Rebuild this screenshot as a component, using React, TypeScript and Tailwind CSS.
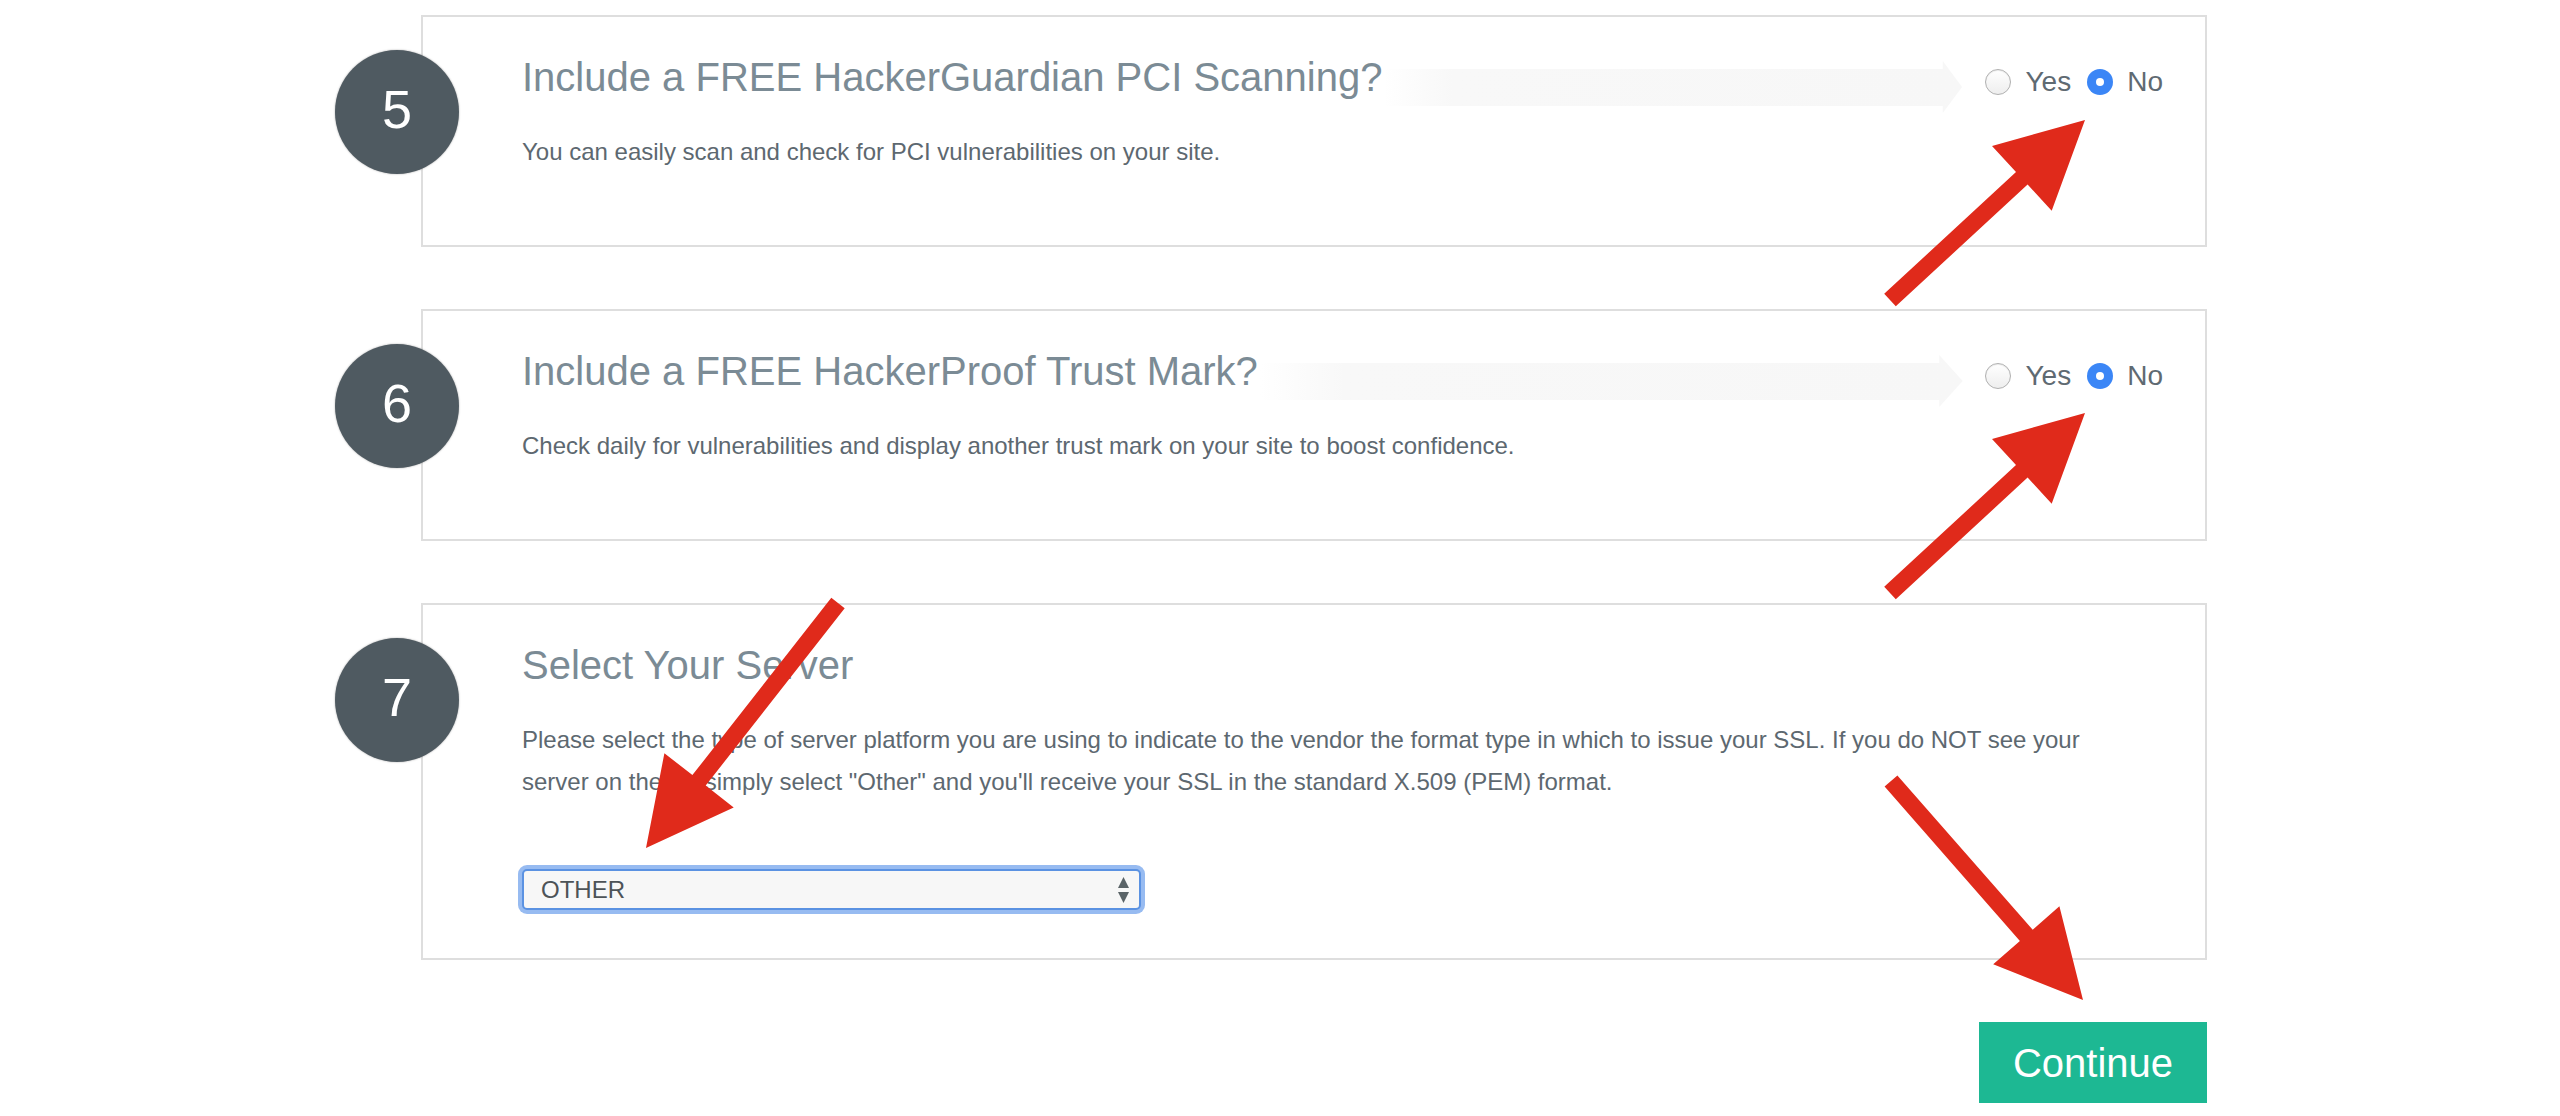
import React from 'react';

type Pt = [number, number];

// polygon for a flat red annotation arrow, tail -> tip
function arrowPoints(tail: Pt, tip: Pt, shaft = 17, headLen = 86, headW = 88) {
  const dx = tip[0] - tail[0];
  const dy = tip[1] - tail[1];
  const len = Math.hypot(dx, dy);
  const ux = dx / len;
  const uy = dy / len;
  const px = -uy;
  const py = ux;
  const bx = tip[0] - ux * headLen;
  const by = tip[1] - uy * headLen;
  const pts: Pt[] = [
    [tail[0] + (px * shaft) / 2, tail[1] + (py * shaft) / 2],
    [bx + (px * shaft) / 2, by + (py * shaft) / 2],
    [bx + (px * headW) / 2, by + (py * headW) / 2],
    tip,
    [bx - (px * headW) / 2, by - (py * headW) / 2],
    [bx - (px * shaft) / 2, by - (py * shaft) / 2],
    [tail[0] - (px * shaft) / 2, tail[1] - (py * shaft) / 2],
  ];
  return pts.map(p => `${p[0].toFixed(1)},${p[1].toFixed(1)}`).join(' ');
}

const arrows: { tail: Pt; tip: Pt }[] = [
  { tail: [1890, 300], tip: [2085, 120] },
  { tail: [1890, 593], tip: [2085, 413] },
  { tail: [838, 603], tip: [646, 848] },
  { tail: [1891, 781], tip: [2083, 1000] },
];

function StepBadge({ n }: { n: number }) {
  return (
    <div className="relative z-10 mt-[35px] mr-[-38px] flex h-[124px] w-[124px] shrink-0 items-center justify-center rounded-full bg-[#4f5a61] shadow-[0_0_2px_rgba(0,0,0,0.35)]">
      <span className="text-[54px] leading-none text-white pb-[6px]">{n}</span>
    </div>
  );
}

function Radio({ checked }: { checked?: boolean }) {
  if (checked) {
    return (
      <span className="flex h-[26px] w-[26px] items-center justify-center rounded-full bg-[#3b86f6]">
        <span className="h-[8px] w-[8px] rounded-full bg-white" />
      </span>
    );
  }
  return (
    <span className="h-[26px] w-[26px] rounded-full border border-[#b0b0b0] bg-gradient-to-b from-white to-[#eeeeee] shadow-[inset_0_1px_1px_rgba(0,0,0,0.08)]" />
  );
}

function HintBand() {
  // faint grey arrow behind the question, pointing at the radios
  return (
    <svg width="100%" height="54" viewBox="0 0 600 54" preserveAspectRatio="none" className="block">
      <defs>
        <linearGradient id="band" x1="0" x2="1" y1="0" y2="0">
          <stop offset="0" stopColor="#f8f8f8" stopOpacity="0" />
          <stop offset="0.12" stopColor="#f8f8f8" stopOpacity="1" />
          <stop offset="1" stopColor="#f7f7f7" stopOpacity="1" />
        </linearGradient>
      </defs>
      <polygon points="0,8 580,8 580,0 600,26 580,52 580,45 0,45" fill="url(#band)" />
    </svg>
  );
}

function YesNo() {
  return (
    <div className="mt-[11px] flex h-[36px] shrink-0 items-center text-[28px] text-[#5f6a72]">
      <Radio />
      <span className="ml-[15px]">Yes</span>
      <span className="ml-[16px]"><Radio checked /></span>
      <span className="ml-[14px]">No</span>
    </div>
  );
}

function QuestionCard({ n, title, desc }: { n: number; title: string; desc: string }) {
  return (
    <div className="flex items-start">
      <StepBadge n={n} />
      <div className="h-[232px] w-[1786px] border-2 border-[#dedede] bg-white pl-[99px] pr-[42px] pt-[36px]">
        <div className="flex h-[48px] items-start">
          <h2 className="shrink-0 text-[40px] leading-[48px] text-[#7b8b95]">{title}</h2>
          <div className="ml-[2px] mr-[22px] mt-[8px] flex-1">
            <HintBand />
          </div>
          <YesNo />
        </div>
        <p className="mt-[30px] text-[24px] leading-[42px] text-[#5d6870]">{desc}</p>
      </div>
    </div>
  );
}

function ServerCard() {
  return (
    <div className="flex items-start">
      <StepBadge n={7} />
      <div className="w-[1786px] border-2 border-[#dedede] bg-white pl-[99px] pr-[42px] pt-[36px] pb-[48px]">
        <h2 className="text-[40px] leading-[48px] text-[#7b8b95]">Select Your Server</h2>
        <p className="mt-[30px] w-[1584px] text-[24px] leading-[42px] text-[#5d6870]">
          Please select the type of server platform you are using to indicate to the vendor the format type in which to issue your SSL. If you do NOT see your server on the list simply select "Other" and you'll receive your SSL in the standard X.509 (PEM) format.
        </p>
        <div className="mt-[66px] flex h-[41px] w-[619px] items-center justify-between rounded-[5px] border-2 border-[#5b92e2] bg-[#f7f7f7] pl-[17px] pr-[9px] shadow-[0_0_0_4px_rgba(125,170,238,0.8)]">
          <span className="text-[24px] text-[#4d5357]">OTHER</span>
          <svg width="13" height="28" viewBox="0 0 13 28">
            <polygon points="6.5,1 12,12 1,12" fill="#5a6367" />
            <polygon points="1,16 12,16 6.5,27" fill="#5a6367" />
          </svg>
        </div>
      </div>
    </div>
  );
}

export default function App() {
  return (
    <div className="relative min-h-[1116px] w-[2560px] overflow-hidden bg-white font-['Liberation_Sans',Arial,sans-serif]">
      <div className="flex flex-col pl-[335px] pt-[15px]">
        <QuestionCard
          n={5}
          title="Include a FREE HackerGuardian PCI Scanning?"
          desc="You can easily scan and check for PCI vulnerabilities on your site."
        />
        <div className="mt-[62px]">
          <QuestionCard
            n={6}
            title="Include a FREE HackerProof Trust Mark?"
            desc="Check daily for vulnerabilities and display another trust mark on your site to boost confidence."
          />
        </div>
        <div className="mt-[62px]">
          <ServerCard />
        </div>
        <div className="mt-[62px] flex w-[1872px] justify-end">
          <button className="h-[81px] w-[228px] bg-[#1db893] text-[40px] text-white">Continue</button>
        </div>
      </div>

      <svg className="pointer-events-none absolute left-0 top-0" width="2560" height="1116" viewBox="0 0 2560 1116">
        {arrows.map((a, i) => (
          <polygon key={i} points={arrowPoints(a.tail, a.tip)} fill="#e02a1b" />
        ))}
      </svg>
    </div>
  );
}
